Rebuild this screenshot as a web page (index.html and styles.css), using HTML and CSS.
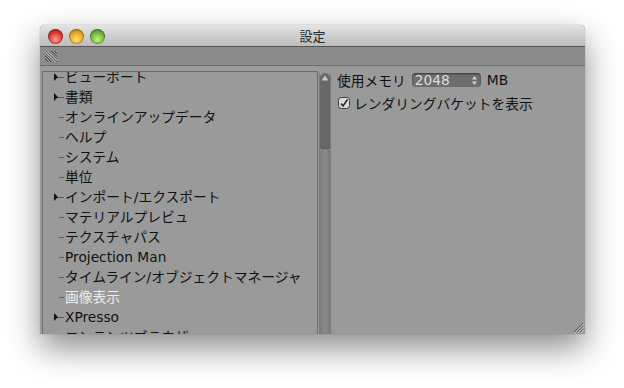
FILE: index.html
```html
<!doctype html>
<html lang="ja">
<head>
    <meta charset="UTF-8">
    <title>設定</title>
    <link rel="stylesheet" href="styles.css">
</head>
<body>

<div class="window">
    <div class="titlebar">
        <div class="lights">
            <span class="light light-red"></span>
            <span class="light light-yellow"></span>
            <span class="light light-green"></span>
        </div>
        <div class="title">設定</div>
        <div></div>
    </div>

    <div class="toolbar">
        <span class="grip"></span>
    </div>

    <div class="content">
        <div class="tree">
            <ul class="tree-list">
                <li class="node has-kids">ビューポート</li>
                <li class="node has-kids">書類</li>
                <li class="node">オンラインアップデータ</li>
                <li class="node">ヘルプ</li>
                <li class="node">システム</li>
                <li class="node">単位</li>
                <li class="node has-kids">インポート/エクスポート</li>
                <li class="node">マテリアルプレビュ</li>
                <li class="node">テクスチャパス</li>
                <li class="node">Projection Man</li>
                <li class="node">タイムライン/オブジェクトマネージャ</li>
                <li class="node selected">画像表示</li>
                <li class="node has-kids">XPresso</li>
                <li class="node">コンテンツブラウザ</li>
            </ul>
        </div>

        <div class="scrollbar">
            <div class="scroll-track">
                <svg class="scroll-up" width="8" height="6" viewBox="0 0 8 6">
                    <path d="M4 0.5 L7.5 5.5 L0.5 5.5 Z" fill="#c8c8c8"/>
                </svg>
            </div>
            <div class="scroll-thumb"></div>
        </div>

        <div class="settings">
            <div class="setting-row">
                <span>使用メモリ</span>
                <span class="select">
                    <span class="select-value">2048</span>
                    <svg class="stepper" width="5" height="9" viewBox="0 0 5 9">
                        <path d="M2.5 0 L5 3.5 L0 3.5 Z M2.5 9 L5 5.5 L0 5.5 Z" fill="#d0d0d0"/>
                    </svg>
                </span>
                <span>MB</span>
            </div>
            <label class="setting-row check-row">
                <svg class="checkbox" width="12" height="12" viewBox="0 0 12 12">
                    <rect x="0.5" y="0.5" width="11" height="11" rx="3" fill="#dcdcdc" stroke="#3a3a3a"/>
                    <path d="M3 6.5 L5 9 L9.5 2.5" fill="none" stroke="#2a2a2a" stroke-width="1.6"/>
                </svg>
                <span>レンダリングバケットを表示</span>
            </label>
        </div>
    </div>

    <svg class="resize" width="12" height="12" viewBox="0 0 12 12">
        <path d="M11 2 L2 11 M11 5 L5 11 M11 8 L8 11" stroke="#5a5a5a" stroke-width="1"/>
        <path d="M12 3 L3 12 M12 6 L6 12 M12 9 L9 12" stroke="#bdbdbd" stroke-width="1"/>
    </svg>
</div>

</body>
</html>
```

FILE: styles.css
```css
body {
    margin: 0;
    width: 624px;
    height: 388px;
    background: #ffffff;
    overflow: hidden;
    font-family: "DejaVu Sans", "Noto Sans CJK JP", sans-serif;
    font-size: 13.75px;
    color: #111111;
}

.window {
    position: relative;
    display: flex;
    flex-direction: column;
    width: 545px;
    height: 309px;
    margin: 25px 0 0 40px;
    border-radius: 5px 5px 0 0;
    background: #9a9a9a;
    overflow: hidden;
    box-shadow: 0 14px 32px rgba(0, 0, 0, .45), 0 0 1px rgba(0, 0, 0, .5);
}

.titlebar {
    display: grid;
    grid-template-columns: 1fr auto 1fr;
    align-items: center;
    height: 21px;
    background: linear-gradient(#e4e4e4, #bcbcbc);
    border-bottom: 1px solid #555555;
}

.lights {
    display: flex;
    gap: 6px;
    padding-left: 8px;
    padding-top: 2px;
}

.light {
    width: 15px;
    height: 15px;
    border-radius: 50%;
    box-shadow: inset 0 0 0 1px rgba(0, 0, 0, .25);
}

.light-red {
    background: radial-gradient(circle at 50% 70%, #ff9a90, #d8362c 55%, #8c1a12);
}

.light-yellow {
    background: radial-gradient(circle at 50% 70%, #ffe27a, #e5a320 55%, #9a6a10);
}

.light-green {
    background: radial-gradient(circle at 50% 70%, #c4f27c, #6cb43a 55%, #2f7a14);
}

.title {
    font-family: "Noto Sans CJK JP", sans-serif;
    font-size: 13px;
    line-height: 21px;
    color: #262626;
}

.toolbar {
    display: flex;
    align-items: center;
    height: 18px;
    padding-left: 5px;
    background: #8b8b8b;
    border-bottom: 1px solid #6c6c6c;
}

.grip {
    width: 12px;
    height: 11px;
    background-image: repeating-linear-gradient(45deg, #5c5c5c 0 1px, #a8a8a8 1px 2px);
}

.content {
    flex: 1;
    display: flex;
    align-items: flex-start;
    padding-top: 5px;
    min-height: 0;
    background: #9a9a9a;
}

.tree {
    width: 274px;
    height: 280px;
    margin-left: 2px;
    border: 1px solid #6e6e6e;
    border-bottom: none;
    overflow: hidden;
}

.tree-list {
    margin: -5px 0 0;
    padding: 0;
    list-style: none;
}

.node {
    position: relative;
    height: 20px;
    padding-left: 22px;
    line-height: 20px;
    white-space: nowrap;
}

.node::before {
    content: "";
    position: absolute;
    left: 16px;
    top: 10px;
    width: 5px;
    height: 1px;
    background: #5a5a5a;
}

.has-kids::after {
    content: "";
    position: absolute;
    left: 11px;
    top: 6px;
    border-left: 4px solid #111111;
    border-top: 4px solid transparent;
    border-bottom: 4px solid transparent;
}

.has-kids::before {
    left: 14px;
    width: 7px;
}

.selected {
    color: #ececec;
}

.scrollbar {
    display: flex;
    flex-direction: column;
    width: 10px;
    height: 270px;
    margin: 2px 0 0 1px;
    border-left: 1px solid #7a7a7a;
    border-right: 1px solid #7a7a7a;
}

.scroll-track {
    display: flex;
    justify-content: center;
    height: 74px;
    padding-top: 2px;
    border-radius: 5px 5px 0 0;
    background: #686868;
}

.scroll-thumb {
    flex: 1;
    border-radius: 5px 5px 0 0;
    background: linear-gradient(90deg, #7a7a7a, #8a8a8a 50%, #7c7c7c);
    box-shadow: 0 -1px 0 #5a5a5a;
}

.settings {
    display: flex;
    flex-direction: column;
    gap: 7px;
    padding: 1px 0 0 6px;
}

.setting-row {
    display: flex;
    align-items: center;
    gap: 6px;
    height: 16px;
    white-space: nowrap;
}

.select {
    display: flex;
    align-items: center;
    justify-content: space-between;
    width: 62px;
    height: 14px;
    padding: 0 4px 0 3px;
    border-radius: 4px;
    background: #6e6e6e;
    box-shadow: inset 0 1px 2px rgba(0, 0, 0, .5);
    color: #dedede;
}

.check-row {
    gap: 4px;
    padding-left: 1px;
}

.resize {
    position: absolute;
    right: 1px;
    bottom: 1px;
}
```
